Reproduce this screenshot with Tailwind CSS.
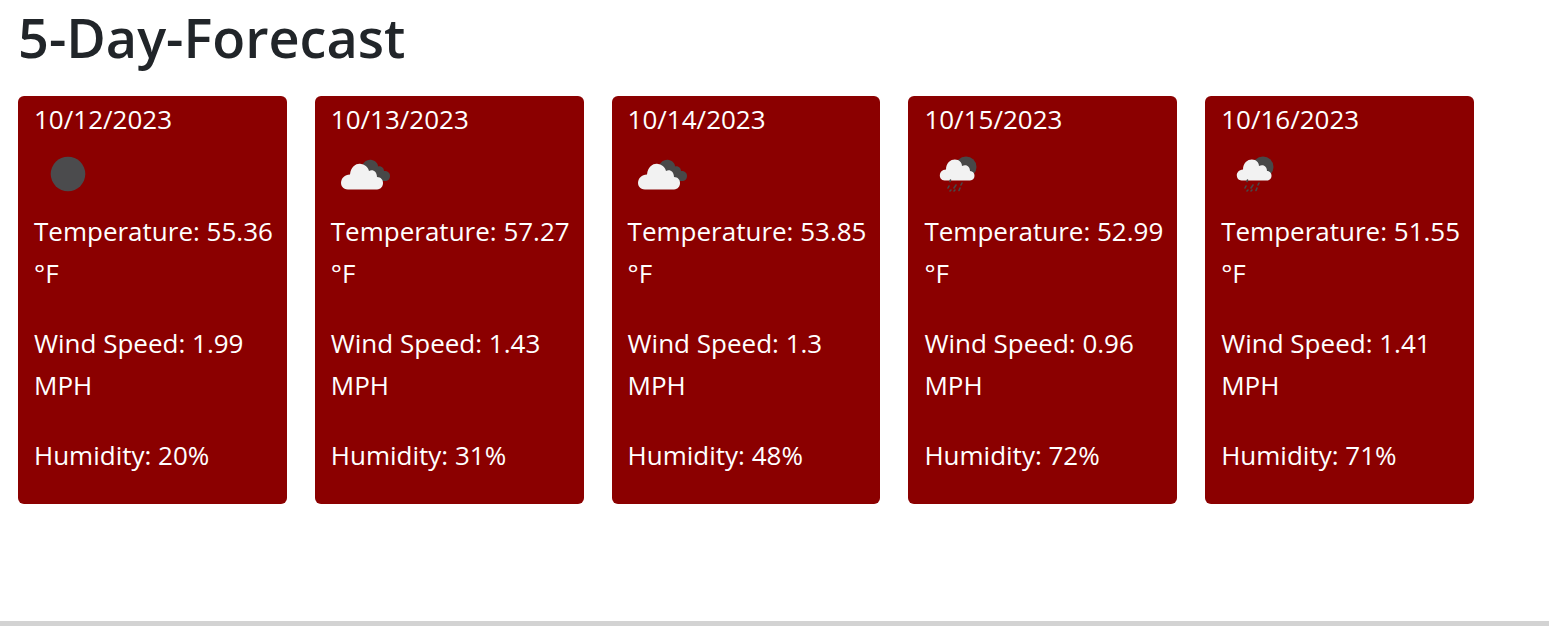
<!DOCTYPE html>
<html lang="en">
<head>
<meta charset="utf-8">
<meta name="viewport" content="width=device-width, initial-scale=1">
<title>5-Day-Forecast</title>
<script src="https://cdn.jsdelivr.net/npm/@tailwindcss/browser@4"></script>
</head>
<body class="flex min-h-screen flex-col bg-white font-['Open_Sans','Noto_Sans',sans-serif] text-[26px] leading-[42px] text-[#212529]">
<svg class="hidden" aria-hidden="true">
  <symbol id="moon" viewBox="0 0 60 60"><circle cx="34" cy="34" r="17.3" fill="#4b4b4d"/></symbol>
  <symbol id="clouds" viewBox="0 0 60 60">
    <path fill="#484848" d="M31 26C33 21 37 19 41 20C45 21 47 24 47 26.500C50 25.500 53 28 53 31C57 31 59 33 59 36C59 39 57 41 54 41H36Z"/>
    <path fill="#f2f2f2" d="M17 49.500C7 49 8 35 19 34.500C20 26 26 23 30 24C34 24.500 37 27 38 31C42 29 46 32 46 37C54 37 54 49 46 49.500Z"/>
  </symbol>
  <symbol id="rain" viewBox="1 0 60 60">
    <circle cx="43" cy="27" r="10.500" fill="#484848"/>
    <path fill="#f2f2f2" d="M21.500 40.500C15 40 15 30 23 29.500C23 21 30 18 35 20C37 21 39 23 39 26C44 24 47 27 47 31C53 31 53 40.500 47 40.500Z"/>
    <path stroke="#484848" stroke-width="1.600" stroke-linecap="round" fill="none" d="M27.500 40L27 41.500M26 46L25 48M33 45L31 48M39 43L38 45M28 50L27 51M37 48L36 50.500M32 50L31 51"/>
  </symbol>
</svg>
<main class="flex-1 pl-[18px] pr-[75px] pb-7">
  <h1 class="py-1 text-[54px] leading-[66px] font-semibold">5-Day-Forecast</h1>
  <section class="mt-[22px] grid grid-cols-5 gap-7 text-white" aria-label="Forecast">
    <article class="rounded-md bg-[#8b0000] pl-4 pr-2 pt-0.5 pb-7">
      <h2>10/12/2023</h2>
      <svg class="mb-2.5 block size-[60px]" role="img" aria-label="Clear night"><use href="#moon"/></svg>
      <p class="mb-7">Temperature: 55.36<br>°F</p><p class="mb-7">Wind Speed: 1.99<br>MPH</p><p>Humidity: 20%</p>
    </article>
    <article class="rounded-md bg-[#8b0000] pl-4 pr-2 pt-0.5 pb-7">
      <h2>10/13/2023</h2>
      <svg class="mb-2.5 block size-[60px]" role="img" aria-label="Clouds"><use href="#clouds"/></svg>
      <p class="mb-7">Temperature: 57.27<br>°F</p><p class="mb-7">Wind Speed: 1.43<br>MPH</p><p>Humidity: 31%</p>
    </article>
    <article class="rounded-md bg-[#8b0000] pl-4 pr-2 pt-0.5 pb-7">
      <h2>10/14/2023</h2>
      <svg class="mb-2.5 block size-[60px]" role="img" aria-label="Clouds"><use href="#clouds"/></svg>
      <p class="mb-7">Temperature: 53.85<br>°F</p><p class="mb-7">Wind Speed: 1.3<br>MPH</p><p>Humidity: 48%</p>
    </article>
    <article class="rounded-md bg-[#8b0000] pl-4 pr-2 pt-0.5 pb-7">
      <h2>10/15/2023</h2>
      <svg class="mb-2.5 block size-[60px]" role="img" aria-label="Rain"><use href="#rain"/></svg>
      <p class="mb-7">Temperature: 52.99<br>°F</p><p class="mb-7">Wind Speed: 0.96<br>MPH</p><p>Humidity: 72%</p>
    </article>
    <article class="rounded-md bg-[#8b0000] pl-4 pr-2 pt-0.5 pb-7">
      <h2>10/16/2023</h2>
      <svg class="mb-2.5 block size-[60px]" role="img" aria-label="Rain"><use href="#rain"/></svg>
      <p class="mb-7">Temperature: 51.55<br>°F</p><p class="mb-7">Wind Speed: 1.41<br>MPH</p><p>Humidity: 71%</p>
    </article>
  </section>
</main>
<footer class="h-[5px] bg-[#d3d3d3]"></footer>
</body>
</html>
